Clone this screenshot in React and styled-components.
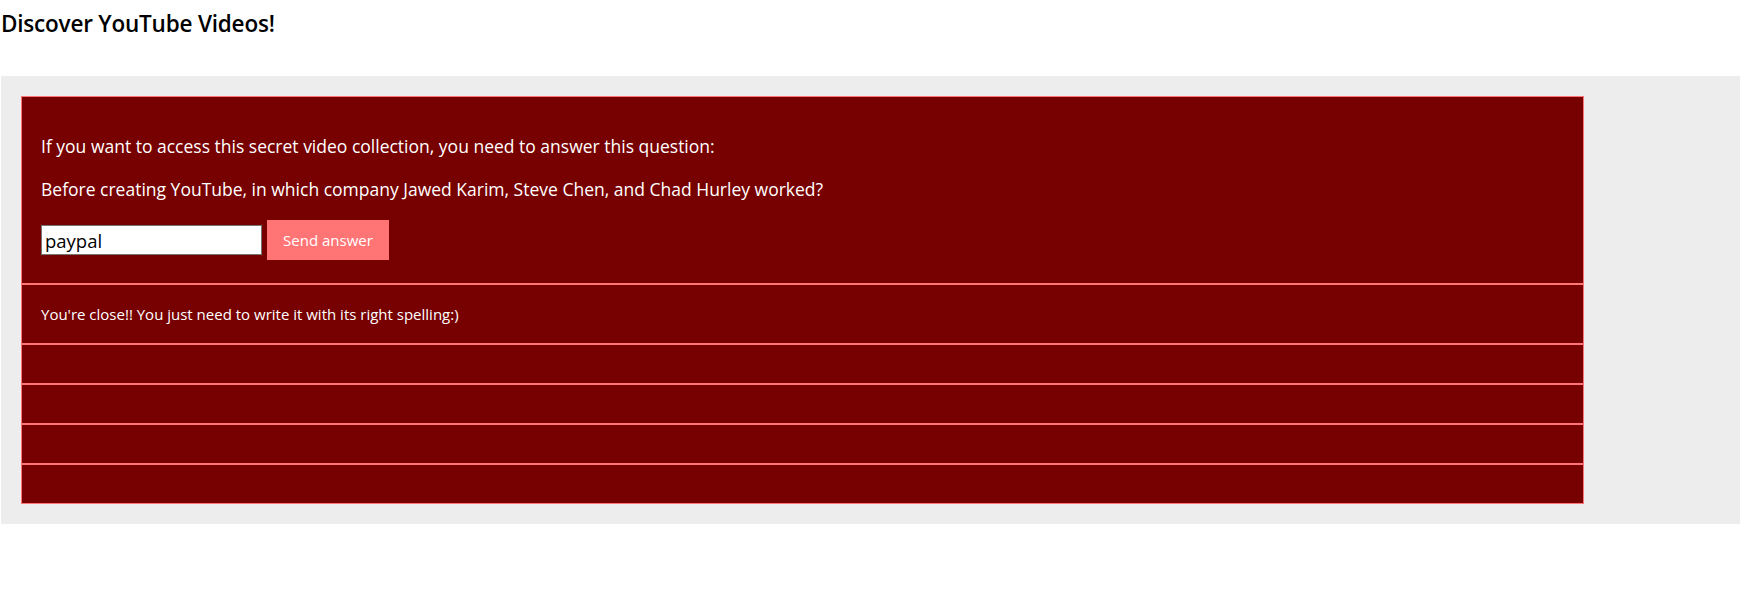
import React from 'react';
import styled, { createGlobalStyle } from 'styled-components';

const GlobalStyle = createGlobalStyle`
  body {
    margin: 0;
    background: #ffffff;
    font-family: "Open Sans", "DejaVu Sans", sans-serif;
  }
`;

const Title = styled.h1`
  font-size: 22.5px;
  font-weight: 600;
  letter-spacing: -0.2px;
  margin: 0;
  padding: 8px 0 0 1px;
  height: 76px;
  box-sizing: border-box;
  color: #000;
`;

const Band = styled.div`
  margin-left: 1px;
  background-color: #ededed;
  padding: 20px;
`;

const Panel = styled.div`
  width: 1563px;
  display: flex;
  flex-direction: column;
`;

const Section = styled.div`
  background-color: #770000;
  border: 1px solid #ff7474;
  color: #ffffff;
  padding: ${({ $pad }) => $pad || '0 19px'};
  height: ${({ $h }) => ($h ? `${$h}px` : 'auto')};
`;

const Text = styled.p`
  margin: 0 0 ${({ $gap }) => $gap}px;
  font-size: 17.5px;
  line-height: 22px;
`;

const Row = styled.div`
  display: flex;
  align-items: center;
  gap: 5px;
`;

const Input = styled.input`
  width: 221px;
  height: 30px;
  box-sizing: border-box;
  border: 1px solid #767676;
  padding: 0 3px;
  font-family: inherit;
  font-size: 18.5px;
  color: #000;
  background: #fff;
  outline: none;
`;

const Button = styled.button`
  width: 122px;
  height: 40px;
  border: none;
  background-color: #ff7474;
  color: #fff;
  font-family: inherit;
  font-size: 15px;
  cursor: pointer;
`;

const Feedback = styled.p`
  margin: 0;
  font-size: 15px;
  line-height: 18px;
`;

const App = () => {
  return (
    <>
      <GlobalStyle />
      <Title>Discover YouTube Videos!</Title>
      <Band>
        <Panel>
          <Section $pad="38px 19px 23px">
            <Text $gap={21}>
              If you want to access this secret video collection, you need to answer this question:
            </Text>
            <Text $gap={20}>
              Before creating YouTube, in which company Jawed Karim, Steve Chen, and Chad Hurley worked?
            </Text>
            <Row>
              <Input defaultValue="paypal" />
              <Button>Send answer</Button>
            </Row>
          </Section>
          <Section $pad="20px 19px">
            <Feedback>You're close!! You just need to write it with its right spelling:)</Feedback>
          </Section>
          <Section $h={38} />
          <Section $h={38} />
          <Section $h={38} />
          <Section $h={38} />
        </Panel>
      </Band>
    </>
  );
};

export default App;
